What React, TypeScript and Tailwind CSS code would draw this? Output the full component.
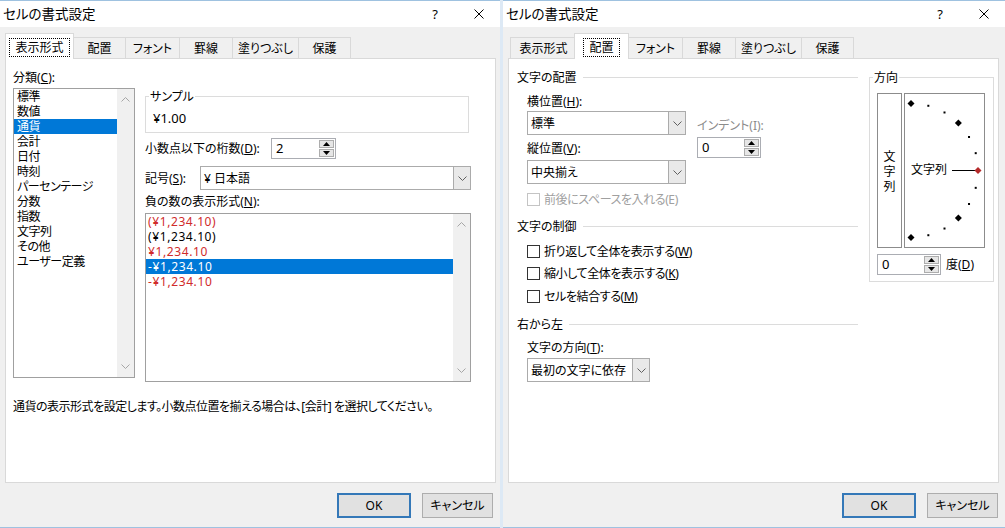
import React from "react";

const FONT = "font-['Noto_Sans','Noto_Sans_CJK_JP',sans-serif] [font-feature-settings:'palt']";

const TABS = [
  { label: "表示形式", w: "w-[66px]", ws: "w-[69px]" },
  { label: "配置", w: "w-[52px]", ws: "w-[55px]" },
  { label: "フォント", w: "w-[54px]", ws: "w-[57px]" },
  { label: "罫線", w: "w-[53px]", ws: "w-[56px]" },
  { label: "塗りつぶし", w: "w-[66px]", ws: "w-[69px]" },
  { label: "保護", w: "w-[53px]", ws: "w-[56px]" },
];

const CATEGORIES = [
  "標準", "数値", "通貨", "会計", "日付", "時刻", "パーセンテージ",
  "分数", "指数", "文字列", "その他", "ユーザー定義",
];

const NEGATIVES = [
  { text: "(¥1,234.10)", red: true },
  { text: "(¥1,234.10)", red: false },
  { text: "¥1,234.10", red: true },
  { text: "-¥1,234.10", red: false },
  { text: "-¥1,234.10", red: true },
];

function Chevron({ up = false, color = "#606060" }: { up?: boolean; color?: string }) {
  return (
    <svg width="9" height="5" viewBox="0 0 9 5">
      <polyline
        points={up ? "0.5,4.5 4.5,0.5 8.5,4.5" : "0.5,0.5 4.5,4.5 8.5,0.5"}
        fill="none" stroke={color} strokeWidth="1" />
    </svg>
  );
}

function Tri({ up }: { up: boolean }) {
  return (
    <svg width="7" height="4" viewBox="0 0 7 4">
      <polygon points={up ? "0,4 3.5,0 7,4" : "0,0 3.5,4 7,0"} fill="#000" />
    </svg>
  );
}

function Scrollbar() {
  return (
    <div className="flex w-[17px] flex-col items-center justify-between bg-[#f0f0f0] py-[8px]">
      <Chevron up color="#a6a6a6" />
      <Chevron color="#a6a6a6" />
    </div>
  );
}

function Combo({ text, w, mt }: { text: string; w: string; mt: string }) {
  return (
    <div className={`${w} ${mt} flex h-[24px] border border-[#ababab] bg-white`}>
      <div className="flex flex-1 items-center pl-[3px]">{text}</div>
      <div className="flex w-[17px] items-center justify-center border-l border-[#ababab] bg-[#e9e9e9]">
        <Chevron />
      </div>
    </div>
  );
}

function Spin({ value, w, mt = "" }: { value: string; w: string; mt?: string }) {
  return (
    <div className={`${w} ${mt} flex h-[21px] border border-[#abadb3] bg-white`}>
      <div className="flex flex-1 items-center pl-[4px] text-[13px]">{value}</div>
      <div className="flex w-[17px] flex-col gap-px p-px">
        <div className="flex flex-1 items-center justify-center border border-[#adadad] bg-[#e6e6e6]"><Tri up /></div>
        <div className="flex flex-1 items-center justify-center border border-[#adadad] bg-[#e6e6e6]"><Tri up={false} /></div>
      </div>
    </div>
  );
}

function Check({ label, disabled = false, mt }: { label: React.ReactNode; disabled?: boolean; mt: string }) {
  return (
    <div className={`${mt} ml-[10px] flex h-[15px] items-center gap-[4px] ${disabled ? "text-[#a0a0a0]" : ""}`}>
      <div className={`h-[13px] w-[13px] border bg-white ${disabled ? "border-[#c4c4c4]" : "border-[#333]"}`} />
      <span className="tracking-[-0.4px]">{label}</span>
    </div>
  );
}

function Header({ children, mt = "" }: { children: React.ReactNode; mt?: string }) {
  return (
    <div className={`${mt} flex items-center gap-[6px]`}>
      <span>{children}</span>
      <div className="h-px flex-1 bg-[#dcdcdc]" />
    </div>
  );
}

function Dialog({ width, active, children }: { width: string; active: number; children: React.ReactNode }) {
  return (
    <div className={`${width} flex shrink-0 flex-col border-y border-[#9fc2e0] bg-[#f0f0f0]`}>
      <div className="flex h-[26px] items-center bg-white pl-[3px]">
        <span className="flex-1 text-[13.5px]">セルの書式設定</span>
        <span className="w-[12px] text-center text-[13px]">?</span>
        <span className="ml-[33px] mr-[16px] flex">
          <svg width="10" height="10" viewBox="0 0 10 10">
            <path d="M0.5 0.5 L9.5 9.5 M9.5 0.5 L0.5 9.5" stroke="#000" strokeWidth="1" />
          </svg>
        </span>
      </div>
      <div className="relative z-10 mt-[6px] -mb-px flex h-[26px] items-end pl-[7px]">
        {TABS.map((t, i) =>
          i === active ? (
            <div key={t.label}
              className={`${t.ws} relative z-10 -ml-[2px] -mr-[1px] flex h-[26px] items-center justify-center border-x border-t border-[#d9d9d9] bg-white pt-px`}>
              <span className="border border-dotted border-black px-[5px] leading-[17px]">{t.label}</span>
            </div>
          ) : (
            <div key={t.label}
              className={`${t.w} flex h-[22px] items-center justify-center border-y border-l border-[#d9d9d9] bg-[#f0f0f0] ${i === TABS.length - 1 ? "border-r" : ""}`}>
              {t.label}
            </div>
          )
        )}
      </div>
      <div className="ml-[5px] h-[425px] w-[491px] border border-[#d9d9d9] bg-white">{children}</div>
      <div className="flex flex-1 items-start justify-end gap-[11px] pr-[7px] pt-[10px]">
        <button className="h-[25px] w-[74px] border-2 border-[#3478b8] bg-[#e1e1e1]">OK</button>
        <button className="h-[25px] w-[71px] border border-[#adadad] bg-[#e1e1e1]">キャンセル</button>
      </div>
    </div>
  );
}

function NumberPanel() {
  return (
    <div className="pl-[7px] pt-[11px]">
      <div className="flex gap-[10px]">
        <div className="w-[122px]">
          <div>分類(<u>C</u>):</div>
          <div className="mt-[3px] flex h-[290px] border border-[#a0a0a0]">
            <div className="flex-1 tracking-[-0.5px]">
              {CATEGORIES.map((c, i) => (
                <div key={c} className={`h-[15px] pl-[3px] ${i === 2 ? "bg-[#0078d7] text-white" : ""}`}>{c}</div>
              ))}
            </div>
            <Scrollbar />
          </div>
        </div>
        <div className="w-[326px]">
          <fieldset className="mt-[19px] w-[324px] border border-[#dcdcdc] pb-[6px] pl-[3px] pt-[7px]">
            <legend className="px-px">サンプル</legend>
            <div className="pl-[4px] text-[13px]">¥1.00</div>
          </fieldset>
          <div className="mt-[5px] flex items-center">
            <span className="w-[126px]">小数点以下の桁数(<u>D</u>):</span>
            <Spin value="2" w="w-[65px]" />
          </div>
          <div className="mt-[7px] flex items-center">
            <span className="w-[55px]">記号(<u>S</u>):</span>
            <Combo text="¥ 日本語" w="w-[271px]" mt="" />
          </div>
          <div className="mt-[4px]">負の数の表示形式(<u>N</u>):</div>
          <div className="mt-[4px] flex h-[169px] border border-[#a0a0a0]">
            <div className="flex-1 tracking-[0.6px]">
              {NEGATIVES.map((n, i) => (
                <div key={i}
                  className={`h-[15px] pl-[2px] ${i === 3 ? "bg-[#0078d7] text-white" : n.red ? "text-[#d02b2b]" : ""}`}>
                  {n.text}
                </div>
              ))}
            </div>
            <Scrollbar />
          </div>
        </div>
      </div>
      <div className="mt-[17px] tracking-[-0.5px]">通貨の表示形式を設定します。小数点位置を揃える場合は、[会計] を選択してください。</div>
    </div>
  );
}

function Dial() {
  const cx = 6, cy = 76.5, r = 67;
  const pts = Array.from({ length: 13 }, (_, i) => {
    const a = ((90 - i * 15) * Math.PI) / 180;
    return { x: cx + r * Math.cos(a), y: cy - r * Math.sin(a), big: i % 3 === 0, red: i === 6 };
  });
  return (
    <div className="relative h-[155px] w-[81px] border border-[#8c8c8c]">
      <svg width="79" height="153" viewBox="0 0 79 153" className="absolute left-0 top-0">
        <line x1="47" y1={cy} x2="71" y2={cy} stroke="#000" strokeWidth="1" />
        {pts.map((p, i) =>
          p.big ? (
            <polygon key={i}
              points={`${p.x},${p.y - 3.5} ${p.x + 3.5},${p.y} ${p.x},${p.y + 3.5} ${p.x - 3.5},${p.y}`}
              fill={p.red ? "#b52a2a" : "#000"} />
          ) : (
            <rect key={i} x={p.x - 1} y={p.y - 1} width="2" height="2" fill="#000" />
          )
        )}
      </svg>
      <span className="absolute left-[6px] top-[68px]">文字列</span>
    </div>
  );
}

function AlignPanel() {
  return (
    <div className="flex pl-[8px] pt-[11px]">
      <div className="w-[341px]">
        <Header>文字の配置</Header>
        <div className="ml-[10px] flex gap-[11px]">
          <div className="w-[159px] pt-[9px]">
            <div>横位置(<u>H</u>):</div>
            <Combo text="標準" w="w-[159px]" mt="mt-[2px]" />
            <div className="mt-[6px]">縦位置(<u>V</u>):</div>
            <Combo text="中央揃え" w="w-[159px]" mt="mt-[4px]" />
          </div>
          <div className="pt-[33px]">
            <div className="text-[#8c8c8c]">インデント(I):</div>
            <Spin value="0" w="w-[64px]" mt="mt-[4px]" />
          </div>
        </div>
        <Check disabled label="前後にスペースを入れる(E)" mt="mt-[8px]" />
        <Header mt="mt-[12px]">文字の制御</Header>
        <Check label={<>折り返して全体を表示する(<u>W</u>)</>} mt="mt-[10px]" />
        <Check label={<>縮小して全体を表示する(<u>K</u>)</>} mt="mt-[7px]" />
        <Check label={<>セルを結合する(<u>M</u>)</>} mt="mt-[8px]" />
        <Header mt="mt-[13px]">右から左</Header>
        <div className="ml-[10px] mt-[8px]">文字の方向(<u>T</u>):</div>
        <div className="ml-[10px]">
          <Combo text="最初の文字に依存" w="w-[123px]" mt="mt-[3px]" />
        </div>
      </div>
      <fieldset className="ml-[11px] w-[125px] self-start border border-[#dcdcdc] pb-[6px] pl-[3px] pt-[8px]">
        <legend className="px-px">方向</legend>
        <div className="pl-[4px]">
          <div className="flex gap-[2px]">
            <div className="flex h-[155px] w-[25px] flex-col items-center justify-center border border-[#8c8c8c] pt-[2px]">
              <span>文</span>
              <span>字</span>
              <span>列</span>
            </div>
            <Dial />
          </div>
          <div className="mt-[6px] flex items-center gap-[5px]">
            <Spin value="0" w="w-[64px]" />
            <span>度(<u>D</u>)</span>
          </div>
        </div>
      </fieldset>
    </div>
  );
}

export default function App() {
  return (
    <div className={`flex h-[528px] w-[1005px] gap-[3px] overflow-hidden bg-[#dde9f5] text-[12px] leading-[15px] text-black ${FONT}`}>
      <Dialog width="w-[500px]" active={0}><NumberPanel /></Dialog>
      <Dialog width="w-[502px]" active={1}><AlignPanel /></Dialog>
    </div>
  );
}
